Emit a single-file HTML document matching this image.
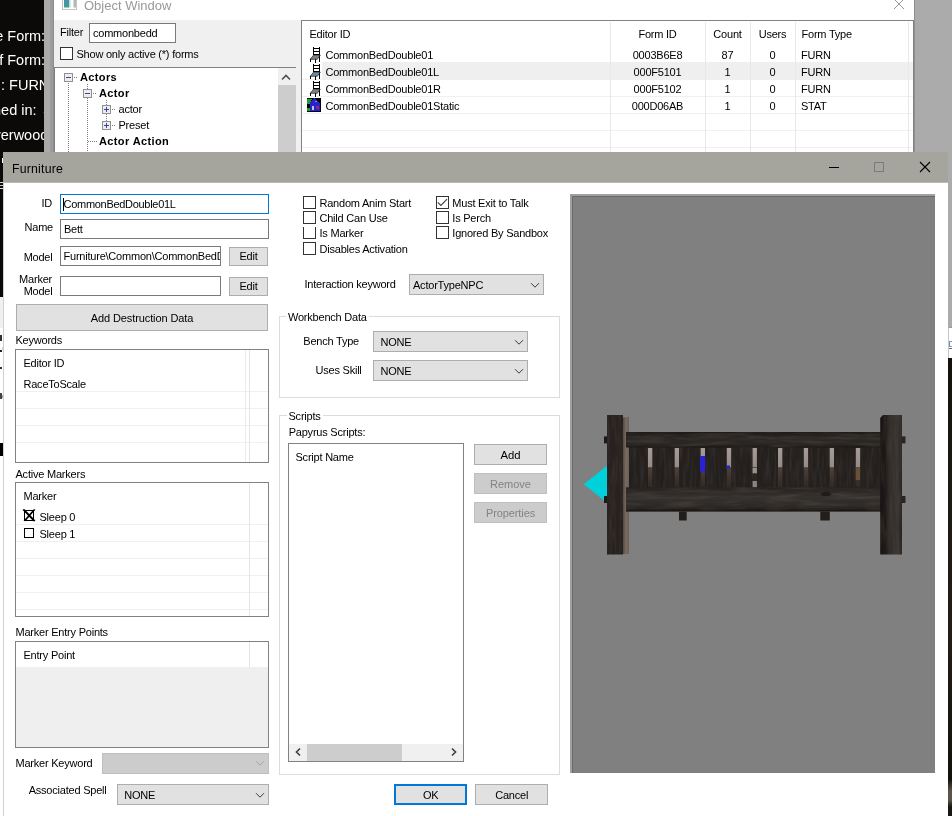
<!DOCTYPE html>
<html><head><meta charset="utf-8"><title>Furniture</title>
<style>
*{box-sizing:border-box;margin:0;padding:0}
html,body{width:952px;height:816px;overflow:hidden;background:#fff}
body{position:relative;font:11px "Liberation Sans",sans-serif;color:#000;letter-spacing:-0.22px}
.a{position:absolute;white-space:nowrap}
.t{position:absolute;white-space:nowrap;line-height:13px;height:13px}
.b{font-weight:bold;letter-spacing:0.38px}
.s{font-size:12px;letter-spacing:0}
.inp{position:absolute;background:#fff;border:1px solid #7a7a7a;overflow:hidden}
.btn{position:absolute;background:#e1e1e1;border:1px solid #adadad}
.dis{background:#cccccc;border-color:#bfbfbf;color:#838383}
.cb{position:absolute;width:13px;height:13px;background:#fff;border:1px solid #333}
.sel{position:absolute;background:#e1e1e1;border:1px solid #adadad}
.lv{position:absolute;background:#fff;border:1px solid #828282;overflow:hidden}
.hl{position:absolute;height:1px;background:#f0f0f0;left:0;right:0}
.vl{position:absolute;width:1px;background:#e5e5e5}
.gb{position:absolute;border:1px solid #dcdcdc}
svg{position:absolute;overflow:visible}
</style></head><body><div id="root" style="position:absolute;left:0;top:0;width:952px;height:816px;overflow:hidden;will-change:transform">
<!-- desktop / render window behind -->
<div class="a" style="left:0px;top:0px;width:44px;height:460px;background:#0b0a09"></div>
<div class="a" style="left:-4.8px;top:27.6px;font-size:14.5px;line-height:16px;letter-spacing:0;color:#fff;width:48.8px;overflow:hidden">e Form:</div>
<div class="a" style="left:-0.8px;top:52.2px;font-size:14.5px;line-height:16px;letter-spacing:0;color:#fff;width:44.8px;overflow:hidden">f Form:</div>
<div class="a" style="left:1px;top:76.8px;font-size:14.5px;line-height:16px;letter-spacing:0;color:#fff;width:43px;overflow:hidden">: FURN</div>
<div class="a" style="left:-7px;top:101.8px;font-size:14.5px;line-height:16px;letter-spacing:0;color:#fff;width:51px;overflow:hidden">ned in: <span style="margin-left:2.5px">S</span></div>
<div class="a" style="left:-6.5px;top:126.8px;font-size:14.5px;line-height:16px;letter-spacing:0;color:#fff;width:50.5px;overflow:hidden">verwood</div>
<div class="a" style="left:44px;top:0px;width:10px;height:152px;background:linear-gradient(90deg,#a9a9a9 0,#ababab 5.5px,#9d9d9d 6.5px,#9b9b9b 9px,#8c8c8c 9px)"></div>
<div class="a" style="left:914px;top:0px;width:38px;height:330px;background:#ababab"></div>
<div class="a" style="left:914px;top:0px;width:1px;height:152px;background:#8e8e8e"></div>
<div class="a" style="left:948px;top:327px;width:4px;height:31px;background:#fff;border-left:1px solid #c8c8c8;border-top:1px solid #999"></div>
<div class="a" style="left:949px;top:341px;width:3px;height:1px;background:#8098b8"></div>
<div class="a" style="left:949px;top:342px;width:1px;height:4px;background:#7088a8"></div>
<div class="a" style="left:949px;top:346px;width:3px;height:1px;background:#8098b8"></div>
<div class="a" style="left:949px;top:348px;width:3px;height:1px;background:#667"></div>
<div class="a" style="left:948.4px;top:358px;width:4px;height:458px;background:linear-gradient(180deg,#15120e 0,#1d1913 30%,#221d15 60%,#14110d 92%,#5a5548 94.5%,#5a5548 96.5%,#1a1712 98%)"></div>
<div class="a" style="left:0px;top:297px;width:4px;height:31px;background:#f0f0f0"></div>
<div class="a" style="left:0px;top:328px;width:4px;height:115px;background:#fff"></div>
<div class="a" style="left:0px;top:443px;width:4px;height:13px;background:#000"></div>
<div class="a" style="left:0px;top:456px;width:4px;height:360px;background:#fff"></div>
<div class="a" style="left:0px;top:335px;width:2px;height:6px;background:#333"></div>
<div class="a" style="left:0px;top:350px;width:2px;height:2px;background:#222"></div>
<div class="a" style="left:2px;top:347px;width:2px;height:3px;background:#e8c890"></div>
<div class="a" style="left:0px;top:367px;width:2px;height:2px;background:#333"></div>
<div class="a" style="left:0px;top:393px;width:2px;height:6px;background:#444"></div>
<div class="a" style="left:2px;top:395px;width:1px;height:3px;background:#c8a070"></div>
<div class="a" style="left:2px;top:158px;width:1px;height:5px;background:#fff"></div>
<div class="a" style="left:0px;top:182px;width:3px;height:1px;background:#ddd"></div>
<div class="a" style="left:0px;top:185px;width:3px;height:1px;background:#ccc"></div>
<div class="a" style="left:0px;top:188px;width:3px;height:1px;background:#ddd"></div>
<!-- Object Window -->
<div class="a" style="left:54px;top:0px;width:860px;height:20px;background:#fff"></div>
<div class="a" style="left:54px;top:20px;width:860px;height:132px;background:#f0f0f0"></div>
<svg style="left:62px;top:0" width="15" height="10"><defs><linearGradient id="ti" x1="0" y1="0" x2="0" y2="1"><stop offset="0" stop-color="#4a92a8"/><stop offset="1" stop-color="#3ea08c"/></linearGradient></defs><rect x="0.5" y="-1" width="14" height="10.5" fill="#fff" stroke="#c4c4c4"/><rect x="2" y="0" width="5.5" height="7.5" fill="url(#ti)"/><rect x="7.5" y="0" width="1.5" height="7.5" fill="#d8eeea"/><rect x="11.5" y="0" width="2.5" height="7.5" fill="#b4b8b8"/></svg>
<div class="t s" style="left:84px;top:-0.6px;color:#999;font-size:13px;letter-spacing:0">Object Window</div>
<svg style="left:894px;top:0" width="10" height="10"><path d="M0 -1 L10 9 M10 -1 L0 9" stroke="#999" stroke-width="1" fill="none"/></svg>
<div class="t " style="left:60px;top:25.70px;">Filter</div>
<div class="inp" style="left:89px;top:23px;width:87px;height:20px;"><div class="t" style="left:3px;top:2.7px">commonbedd</div></div>
<div class="cb" style="left:60px;top:47px;width:13px;height:13px;"></div>
<div class="t " style="left:76.5px;top:47.70px;">Show only active (*) forms</div>
<div class="lv" style="left:54px;top:67px;width:242px;height:90px;border-bottom:0"></div>
<div class="a" style="left:278px;top:68px;width:18px;height:84px;background:#f0f0f0"></div>
<div class="a" style="left:278px;top:85px;width:18px;height:67px;background:#cdcdcd"></div>
<svg style="left:281px;top:74px" width="10" height="7"><path d="M1 5.5 L5 1.5 L9 5.5" stroke="#505050" stroke-width="1.6" fill="none"/></svg>
<svg style="left:54px;top:68px" width="224" height="84" shape-rendering="crispEdges"><g stroke="#808080" stroke-width="1" stroke-dasharray="1 1" fill="none"><path d="M14.5 15 V84"/><path d="M33.5 16 V84"/><path d="M52.5 32 V62"/><path d="M20 9.5 H24"/><path d="M39 25.5 H43"/><path d="M58 41.5 H62"/><path d="M58 57.5 H62"/><path d="M34 73.5 H43"/></g></svg>
<svg style="left:64px;top:73px" width="9" height="9" shape-rendering="crispEdges"><rect x="0.5" y="0.5" width="8" height="8" fill="#ececf2" stroke="#909090"/><path d="M2 4.5 H7" stroke="#3a4a90" stroke-width="1"/></svg>
<svg style="left:83px;top:89px" width="9" height="9" shape-rendering="crispEdges"><rect x="0.5" y="0.5" width="8" height="8" fill="#ececf2" stroke="#909090"/><path d="M2 4.5 H7" stroke="#3a4a90" stroke-width="1"/></svg>
<svg style="left:102px;top:105px" width="9" height="9" shape-rendering="crispEdges"><rect x="0.5" y="0.5" width="8" height="8" fill="#ececf2" stroke="#909090"/><path d="M2 4.5 H7" stroke="#3a4a90" stroke-width="1"/><path d="M4.5 2 V7" stroke="#3a4a90" stroke-width="1"/></svg>
<svg style="left:102px;top:121px" width="9" height="9" shape-rendering="crispEdges"><rect x="0.5" y="0.5" width="8" height="8" fill="#ececf2" stroke="#909090"/><path d="M2 4.5 H7" stroke="#3a4a90" stroke-width="1"/><path d="M4.5 2 V7" stroke="#3a4a90" stroke-width="1"/></svg>
<div class="t b" style="left:80px;top:70.70px;">Actors</div>
<div class="t b" style="left:99px;top:86.70px;">Actor</div>
<div class="t " style="left:118.5px;top:102.70px;">actor</div>
<div class="t " style="left:118.5px;top:118.70px;">Preset</div>
<div class="t b" style="left:99px;top:134.70px;">Actor Action</div>
<div class="lv" style="left:301px;top:20px;width:613px;height:136px;border-bottom:0"></div>
<div class="a" style="left:322px;top:62px;width:591px;height:18px;background:#efefef"></div>
<div class="a" style="left:302px;top:79px;width:611px;height:1px;background:#f0f0f0"></div>
<div class="a" style="left:302px;top:96px;width:611px;height:1px;background:#f0f0f0"></div>
<div class="a" style="left:302px;top:113px;width:611px;height:1px;background:#f0f0f0"></div>
<div class="a" style="left:302px;top:130px;width:611px;height:1px;background:#f0f0f0"></div>
<div class="a" style="left:302px;top:147px;width:611px;height:1px;background:#f0f0f0"></div>
<div class="a" style="left:610px;top:22px;width:1px;height:130px;background:#e8e8e8"></div>
<div class="a" style="left:705px;top:22px;width:1px;height:130px;background:#e8e8e8"></div>
<div class="a" style="left:750px;top:22px;width:1px;height:130px;background:#e8e8e8"></div>
<div class="a" style="left:795px;top:22px;width:1px;height:130px;background:#e8e8e8"></div>
<div class="a" style="left:908px;top:22px;width:1px;height:130px;background:#e8e8e8"></div>
<div class="t " style="left:309.5px;top:27.70px;">Editor ID</div>
<div class="t " style="left:557.5px;width:200px;text-align:center;top:27.70px;">Form ID</div>
<div class="t " style="left:627.5px;width:200px;text-align:center;top:27.70px;">Count</div>
<div class="t " style="left:672.5px;width:200px;text-align:center;top:27.70px;">Users</div>
<div class="t " style="left:801.5px;top:27.70px;">Form Type</div>
<div class="t " style="left:325.5px;top:48.70px;">CommonBedDouble01</div>
<div class="t " style="left:557.5px;width:200px;text-align:center;top:48.70px;">0003B6E8</div>
<div class="t " style="left:627.5px;width:200px;text-align:center;top:48.70px;">87</div>
<div class="t " style="left:672.5px;width:200px;text-align:center;top:48.70px;">0</div>
<div class="t " style="left:801px;top:48.70px;">FURN</div>
<svg style="left:309px;top:46.5px" width="12" height="17" shape-rendering="crispEdges"><g fill="none" stroke="#000" stroke-width="1"><path d="M4.5 0 V8 M10.5 0 V15 M4.5 1.5 H10.5 M4.5 4.5 H10.5 M4.5 7.5 H10.5 M1.5 12 V15 M6.5 12 V16"/></g><path d="M4.5 8.2 H11.3 L8.3 12.3 H1.2 Z" fill="#808080" stroke="#000" stroke-width="0.6" shape-rendering="auto"/></svg>
<div class="t " style="left:325.5px;top:65.70px;">CommonBedDouble01L</div>
<div class="t " style="left:557.5px;width:200px;text-align:center;top:65.70px;">000F5101</div>
<div class="t " style="left:627.5px;width:200px;text-align:center;top:65.70px;">1</div>
<div class="t " style="left:672.5px;width:200px;text-align:center;top:65.70px;">0</div>
<div class="t " style="left:801px;top:65.70px;">FURN</div>
<svg style="left:309px;top:63.5px" width="12" height="17" shape-rendering="crispEdges"><g fill="none" stroke="#000" stroke-width="1"><path d="M4.5 0 V8 M10.5 0 V15 M4.5 1.5 H10.5 M4.5 4.5 H10.5 M4.5 7.5 H10.5 M1.5 12 V15 M6.5 12 V16"/></g><path d="M4.5 8.2 H11.3 L8.3 12.3 H1.2 Z" fill="#6888a8" stroke="#000" stroke-width="0.6" shape-rendering="auto"/></svg>
<div class="t " style="left:325.5px;top:82.70px;">CommonBedDouble01R</div>
<div class="t " style="left:557.5px;width:200px;text-align:center;top:82.70px;">000F5102</div>
<div class="t " style="left:627.5px;width:200px;text-align:center;top:82.70px;">1</div>
<div class="t " style="left:672.5px;width:200px;text-align:center;top:82.70px;">0</div>
<div class="t " style="left:801px;top:82.70px;">FURN</div>
<svg style="left:309px;top:80.5px" width="12" height="17" shape-rendering="crispEdges"><g fill="none" stroke="#000" stroke-width="1"><path d="M4.5 0 V8 M10.5 0 V15 M4.5 1.5 H10.5 M4.5 4.5 H10.5 M4.5 7.5 H10.5 M1.5 12 V15 M6.5 12 V16"/></g><path d="M4.5 8.2 H11.3 L8.3 12.3 H1.2 Z" fill="#808080" stroke="#000" stroke-width="0.6" shape-rendering="auto"/></svg>
<div class="t " style="left:325.5px;top:99.70px;">CommonBedDouble01Static</div>
<div class="t " style="left:557.5px;width:200px;text-align:center;top:99.70px;">000D06AB</div>
<div class="t " style="left:627.5px;width:200px;text-align:center;top:99.70px;">1</div>
<div class="t " style="left:672.5px;width:200px;text-align:center;top:99.70px;">0</div>
<div class="t " style="left:801px;top:99.70px;">STAT</div>
<svg style="left:307px;top:98px" width="15" height="15" shape-rendering="crispEdges"><rect width="14" height="14" fill="#000"/><path d="M0 1 H5 L3 6 H0 Z" fill="#18a030"/><path d="M0 10 H3 V13 H0 Z" fill="#18a030"/><path d="M7 0 L13 6 V13 H3 V5 Z" fill="#2424c8"/><rect x="5" y="8" width="2" height="4" fill="#c0c0ff"/><rect x="9" y="8" width="3" height="3" fill="#a02080"/><rect x="8" y="3" width="2" height="1" fill="#d060c0"/></svg>
<!-- Furniture dialog -->
<div class="a" style="left:3px;top:152px;width:945px;height:664px;background:#fff;border-left:1px solid #d0d0d0"></div>
<div class="a" style="left:3px;top:152px;width:945px;height:30px;background:#a6a59d"></div>
<div class="a" style="left:3px;top:182px;width:945px;height:1px;background:#bab9b3"></div>
<div class="t s" style="left:12px;top:162.5px;font-size:12.3px;letter-spacing:0.2px">Furniture</div>
<svg style="left:829px;top:162px" width="102" height="11"><path d="M0 5.5 H10" stroke="#000" stroke-width="1"/><rect x="45.5" y="0.5" width="9" height="9" fill="none" stroke="#7d7b75"/><path d="M91 0 L101 10 M101 0 L91 10" stroke="#000" stroke-width="1.1"/></svg>
<div class="t " style="left:-148px;width:200px;text-align:right;top:196.70px;">ID</div>
<div class="t " style="left:-147px;width:200px;text-align:right;top:220.70px;">Name</div>
<div class="t " style="left:-147.5px;width:200px;text-align:right;top:250.70px;">Model</div>
<div class="t " style="left:-148px;width:200px;text-align:right;top:272.70px;">Marker</div>
<div class="t " style="left:-147.5px;width:200px;text-align:right;top:285.20px;">Model</div>
<div class="inp" style="left:60px;top:194px;width:209px;height:20px;border-color:#0078d7"><div class="a" style="left:2px;top:3px;width:1px;height:13px;background:#000"></div><div class="t" style="left:2.6px;top:2.9px;letter-spacing:-0.3px">CommonBedDouble01L</div></div>
<div class="inp" style="left:60px;top:219px;width:209px;height:20px;"><div class="t" style="left:3px;top:3px">Bett</div></div>
<div class="inp" style="left:60px;top:246px;width:161px;height:20px;"><div class="t" style="left:2.5px;top:3.2px">Furniture\Common\CommonBedDouble01L.nif</div></div>
<div class="inp" style="left:60px;top:276px;width:161px;height:20px;"></div>
<div class="btn" style="left:229px;top:247px;width:39px;height:19px;"></div>
<div class="t " style="left:148.5px;width:200px;text-align:center;top:250.20px;">Edit</div>
<div class="btn" style="left:229px;top:277px;width:39px;height:19px;"></div>
<div class="t " style="left:148.5px;width:200px;text-align:center;top:280.20px;">Edit</div>
<div class="btn" style="left:16px;top:304px;width:252px;height:27px;"></div>
<div class="t " style="left:42px;width:200px;text-align:center;top:311.70px;letter-spacing:-0.1px;">Add Destruction Data</div>
<div class="t " style="left:15.5px;top:333.70px;">Keywords</div>
<div class="lv" style="left:15px;top:349px;width:254px;height:114px;"><div class="hl" style="top:41px"></div><div class="hl" style="top:58px"></div><div class="hl" style="top:75px"></div><div class="hl" style="top:92px"></div><div class="vl" style="left:229px;top:0;height:112px;background:#ececec"></div><div class="vl" style="left:233px;top:0;height:112px"></div></div>
<div class="t " style="left:23.5px;top:356.70px;">Editor ID</div>
<div class="t " style="left:23.5px;top:377.70px;">RaceToScale</div>
<div class="t " style="left:15.5px;top:467.70px;">Active Markers</div>
<div class="lv" style="left:15px;top:482px;width:254px;height:135px;"><div class="hl" style="top:41px"></div><div class="hl" style="top:58px"></div><div class="hl" style="top:75px"></div><div class="hl" style="top:92px"></div><div class="hl" style="top:109px"></div><div class="hl" style="top:126px"></div><div class="vl" style="left:233px;top:0;height:134px"></div></div>
<div class="t " style="left:23.5px;top:489.70px;">Marker</div>
<div class="t " style="left:39.5px;top:510.70px;">Sleep 0</div>
<div class="t " style="left:39.5px;top:527.70px;">Sleep 1</div>
<svg style="left:23px;top:509px" width="13" height="13" shape-rendering="crispEdges"><rect x="1.5" y="1.5" width="9" height="10" fill="#fff" stroke="#000"/><path d="M0 0.5 L11 12 M1 0.5 L12 12 M11 0.5 L1 12 M12 0.5 L2 12" stroke="#000" stroke-width="1.1" shape-rendering="auto"/></svg>
<svg style="left:24px;top:528px" width="11" height="11" shape-rendering="crispEdges"><rect x="0.5" y="0.5" width="9" height="9" fill="#fff" stroke="#000"/></svg>
<div class="t " style="left:15.5px;top:625.70px;">Marker Entry Points</div>
<div class="lv" style="left:15px;top:641px;width:254px;height:107px;background:#efefef"><div class="a" style="left:0;top:0;width:252px;height:25px;background:#fff"></div><div class="vl" style="left:233px;top:0;height:25px"></div></div>
<div class="t " style="left:23.5px;top:648.70px;">Entry Point</div>
<div class="t " style="left:15.5px;top:756.70px;">Marker Keyword</div>
<div class="sel" style="left:102px;top:753px;width:167px;height:21px;background:#cccccc;border-color:#bfbfbf"></div>
<svg style="left:255px;top:760px" width="10" height="7"><path d="M1 1.2 L5 5.2 L9 1.2" stroke="#a6a6a6" stroke-width="1" fill="none"/></svg>
<div class="t " style="left:28.7px;top:783.70px;">Associated Spell</div>
<div class="sel" style="left:117px;top:784px;width:152px;height:21px;"></div>
<div class="t " style="left:124.3px;top:788.70px;">NONE</div>
<svg style="left:255px;top:792px" width="10" height="7"><path d="M1 1.2 L5 5.2 L9 1.2" stroke="#3a3a3a" stroke-width="1" fill="none"/></svg>
<div class="cb" style="left:303px;top:196px"></div>
<div class="t " style="left:319.5px;top:196.70px;">Random Anim Start</div>
<div class="cb" style="left:303px;top:211px"></div>
<div class="t " style="left:319.5px;top:211.70px;">Child Can Use</div>
<div class="a" style="left:303px;top:227px;width:13px;height:11.5px;border:1px solid #333;border-top:0;background:#fff"></div>
<div class="t " style="left:319.5px;top:226.70px;">Is Marker</div>
<div class="cb" style="left:303px;top:242px"></div>
<div class="t " style="left:319.5px;top:242.70px;">Disables Activation</div>
<div class="cb" style="left:436px;top:196px"></div>
<svg style="left:436px;top:196px" width="13" height="13"><path d="M1.8 6.3 L4.9 9.4 L11 3.2" stroke="#444" stroke-width="1.2" fill="none"/></svg>
<div class="t " style="left:452.3px;top:196.70px;">Must Exit to Talk</div>
<div class="cb" style="left:436px;top:211px"></div>
<div class="t " style="left:452.3px;top:211.70px;">Is Perch</div>
<div class="cb" style="left:436px;top:226px"></div>
<div class="t " style="left:452.3px;top:226.70px;">Ignored By Sandbox</div>
<div class="t " style="left:304.5px;top:277.70px;">Interaction keyword</div>
<div class="sel" style="left:409px;top:274px;width:135px;height:21px;"></div>
<div class="t " style="left:413px;top:278.90px;">ActorTypeNPC</div>
<svg style="left:530px;top:282px" width="10" height="7"><path d="M1 1.2 L5 5.2 L9 1.2" stroke="#3a3a3a" stroke-width="1" fill="none"/></svg>
<div class="gb" style="left:279px;top:316px;width:281px;height:82px;"></div>
<div class="t" style="left:286px;top:310.5px;background:#fff;padding:0 2px">Workbench Data</div>
<div class="t " style="left:303.3px;top:334.70px;">Bench Type</div>
<div class="sel" style="left:373px;top:331px;width:155px;height:21px;"></div>
<div class="t " style="left:380.5px;top:335.90px;">NONE</div>
<svg style="left:514px;top:339px" width="10" height="7"><path d="M1 1.2 L5 5.2 L9 1.2" stroke="#3a3a3a" stroke-width="1" fill="none"/></svg>
<div class="t " style="left:315.5px;top:363.70px;">Uses Skill</div>
<div class="sel" style="left:373px;top:360px;width:155px;height:21px;"></div>
<div class="t " style="left:380.5px;top:364.90px;">NONE</div>
<svg style="left:514px;top:368px" width="10" height="7"><path d="M1 1.2 L5 5.2 L9 1.2" stroke="#3a3a3a" stroke-width="1" fill="none"/></svg>
<div class="gb" style="left:279px;top:415px;width:281px;height:360px;"></div>
<div class="t" style="left:286.5px;top:409.7px;background:#fff;padding:0 2px">Scripts</div>
<div class="t " style="left:288.7px;top:425.70px;">Papyrus Scripts:</div>
<div class="lv" style="left:288px;top:443px;width:176px;height:319px;"><div class="a" style="left:0;top:300px;width:174px;height:17px;background:#f0f0f0"></div><div class="a" style="left:18px;top:300px;width:95px;height:17px;background:#cdcdcd"></div></div>
<div class="t " style="left:295.5px;top:450.70px;">Script Name</div>
<svg style="left:294px;top:747px" width="8" height="10"><path d="M6 1.5 L2.5 5 L6 8.5" stroke="#444" stroke-width="1.7" fill="none"/></svg>
<svg style="left:450px;top:747px" width="8" height="10"><path d="M2 1.5 L5.5 5 L2 8.5" stroke="#444" stroke-width="1.7" fill="none"/></svg>
<div class="btn" style="left:474px;top:444px;width:73px;height:21px;"></div>
<div class="t s" style="left:410.5px;width:200px;text-align:center;top:449px;font-size:11.3px">Add</div>
<div class="btn dis" style="left:474px;top:473px;width:73px;height:21px;"></div>
<div class="t s" style="left:410.5px;width:200px;text-align:center;top:478px;font-size:11px;color:#838383">Remove</div>
<div class="btn dis" style="left:474px;top:502px;width:73px;height:21px;"></div>
<div class="t s" style="left:410.5px;width:200px;text-align:center;top:507px;font-size:11px;letter-spacing:-0.1px;color:#838383">Properties</div>
<div class="btn" style="left:394px;top:784px;width:73px;height:21px;border:2px solid #0078d7"></div>
<div class="t " style="left:330.7px;width:200px;text-align:center;top:788.70px;">OK</div>
<div class="btn" style="left:475px;top:784px;width:73px;height:21px;"></div>
<div class="t " style="left:411.7px;width:200px;text-align:center;top:788.70px;">Cancel</div>
<div class="a" style="left:570px;top:194px;width:365px;height:579px;background:#808080;border-top:2px solid #a0a0a0;border-left:2px solid #a0a0a0"></div>
<div class="a" style="left:572px;top:196px;width:363px;height:577px;border-top:1px solid #696969;border-left:1px solid #696969"></div>
<svg style="left:570px;top:194px" width="366" height="580" viewBox="570 194 366 580">
<defs>
<filter id="gv" x="0" y="0" width="1" height="1" color-interpolation-filters="sRGB">
<feTurbulence type="fractalNoise" baseFrequency="0.3 0.035" numOctaves="3" seed="4" result="n"/>
<feColorMatrix in="n" type="matrix" values="0 0 0 0 0.40  0 0 0 0 0.36  0 0 0 0 0.33  0.55 0 0 0 -0.22" result="l"/>
<feComposite in="l" in2="SourceAlpha" operator="in" result="lc"/>
<feMerge><feMergeNode in="SourceGraphic"/><feMergeNode in="lc"/></feMerge>
</filter>
<filter id="gh" x="0" y="0" width="1" height="1" color-interpolation-filters="sRGB">
<feTurbulence type="fractalNoise" baseFrequency="0.03 0.3" numOctaves="3" seed="9" result="n"/>
<feColorMatrix in="n" type="matrix" values="0 0 0 0 0.40  0 0 0 0 0.37  0 0 0 0 0.34  0.7 0 0 0 -0.28" result="l"/>
<feComposite in="l" in2="SourceAlpha" operator="in" result="lc"/>
<feMerge><feMergeNode in="SourceGraphic"/><feMergeNode in="lc"/></feMerge>
</filter>
<linearGradient id="wd" x1="0" y1="0" x2="0" y2="1"><stop offset="0" stop-color="#1c1917"/><stop offset="0.35" stop-color="#2b2724"/><stop offset="0.8" stop-color="#2a2623"/><stop offset="1" stop-color="#191615"/></linearGradient>
<linearGradient id="wd2" x1="0" y1="0" x2="0" y2="1"><stop offset="0" stop-color="#252120"/><stop offset="0.4" stop-color="#35312e"/><stop offset="0.8" stop-color="#2c2825"/><stop offset="1" stop-color="#151312"/></linearGradient>
<linearGradient id="gap" x1="0" y1="0" x2="0" y2="1"><stop offset="0" stop-color="#a59c98"/><stop offset="0.47" stop-color="#968c87"/><stop offset="0.5" stop-color="#4d4037"/><stop offset="1" stop-color="#302823"/></linearGradient>
<linearGradient id="side" x1="0" y1="0" x2="1" y2="0"><stop offset="0" stop-color="#54493f"/><stop offset="0.5" stop-color="#7a6c62"/><stop offset="1" stop-color="#6a5e56"/></linearGradient>
<linearGradient id="rp" x1="0" y1="0" x2="1" y2="0"><stop offset="0" stop-color="#161312"/><stop offset="0.25" stop-color="#1d1a18"/><stop offset="0.4" stop-color="#2f2b28"/><stop offset="0.8" stop-color="#3a3531"/><stop offset="1" stop-color="#262220"/></linearGradient>
</defs>
<!-- cyan marker -->
<path d="M583.7 484.3 L607.5 465.3 V503 Z" fill="#00d0da"/>
<!-- slat back -->
<rect x="629" y="447" width="252" height="41" fill="#231f1d" filter="url(#gv)"/>
<g fill="url(#gap)">
<rect x="648" y="448" width="4.3" height="39.5"/><rect x="674.7" y="448" width="4.3" height="39.5"/><rect x="700.7" y="448" width="4.3" height="39.5"/><rect x="726.8" y="448" width="4.3" height="39.5"/><rect x="752.6" y="448" width="4.3" height="39.5"/><rect x="778" y="448" width="4.3" height="39.5"/><rect x="803.8" y="448" width="4.3" height="39.5"/><rect x="829.7" y="448" width="4.3" height="39.5"/><rect x="855.8" y="448" width="4.3" height="39.5"/>
</g>
<rect x="752.6" y="468" width="4.3" height="5.5" fill="#9a918c"/><rect x="752.6" y="473.5" width="4.3" height="7.5" fill="#2a2522"/><rect x="752.6" y="481" width="4.3" height="6.5" fill="#8a8480"/>
<rect x="700.2" y="456" width="5" height="16" fill="#2a20d8"/>
<rect x="726.5" y="465.5" width="3.5" height="3" fill="#2a20c0"/>
<rect x="855.8" y="468" width="4.3" height="12" fill="#6a5038"/>
<!-- rails -->
<path d="M623 417.5 L629 417 V554 H623 Z" fill="url(#side)"/>
<rect x="626" y="432" width="258" height="15.5" fill="url(#wd)" filter="url(#gh)"/>
<rect x="626" y="487.3" width="258" height="24.3" fill="url(#wd2)" filter="url(#gh)"/>
<ellipse cx="826" cy="494" rx="5" ry="2" fill="#151211" opacity="0.7"/>
<!-- under legs -->
<rect x="679" y="511.5" width="7.7" height="9" fill="#221e1c"/><rect x="820.3" y="511.5" width="9.5" height="9" fill="#221e1c"/>
<!-- posts -->
<rect x="607" y="415" width="16" height="139.5" fill="#27221f" filter="url(#gv)"/>
<path d="M880.2 418 L883 415 H902 V554.5 H880.2 Z" fill="url(#rp)" filter="url(#gv)"/>
<!-- pegs -->
<rect x="604" y="436.4" width="3" height="7" fill="#1e1a19"/><rect x="604" y="496" width="3" height="7" fill="#1e1a19"/>
<rect x="902" y="436.4" width="3.5" height="7" fill="#2a2523"/><rect x="902" y="496" width="3.5" height="7" fill="#2a2523"/>
</svg>

</div></body></html>
